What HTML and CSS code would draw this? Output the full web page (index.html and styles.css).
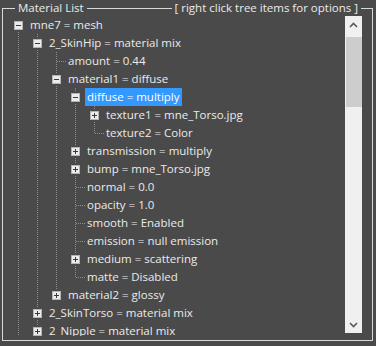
FILE: index.html
```html
<!DOCTYPE html>
<html lang="en">
<head>
    <meta charset="UTF-8">
    <title>Material List</title>
    <link rel="stylesheet" href="styles.css">
</head>
<body>
    <svg class="defs" width="0" height="0">
        <symbol id="minus" viewBox="0 0 9 9">
            <rect x="0.5" y="0.5" width="8" height="8" fill="#ececec" stroke="#b4b4b4"/>
            <path d="M2 4.5h5" stroke="#3a3a3a"/>
        </symbol>
        <symbol id="plus" viewBox="0 0 9 9">
            <rect x="0.5" y="0.5" width="8" height="8" fill="#ececec" stroke="#b4b4b4"/>
            <path d="M2 4.5h5M4.5 2v5" stroke="#3a3a3a"/>
        </symbol>
    </svg>

    <div class="group">
        <div class="hdr">
            <span class="cap-l"></span>
            <span class="caption">Material List</span>
            <span class="ln"></span>
            <span class="caption">[ right click tree items for options ]</span>
            <span class="cap-r"></span>
        </div>

        <div class="frame">
            <div class="rows">
                <div class="row"><span class="g first"><svg class="ex"><use href="#minus"/></svg></span><span class="label">mne7 = mesh</span></div>
                <div class="row"><span class="g v"></span><span class="g v"><svg class="ex"><use href="#minus"/></svg></span><span class="label">2_SkinHip = material mix</span></div>
                <div class="row"><span class="g v"></span><span class="g v"></span><span class="g t"></span><span class="label">amount = 0.44</span></div>
                <div class="row"><span class="g v"></span><span class="g v"></span><span class="g v"><svg class="ex"><use href="#minus"/></svg></span><span class="label">material1 = diffuse</span></div>
                <div class="row"><span class="g v"></span><span class="g v"></span><span class="g v"></span><span class="g v"><svg class="ex"><use href="#minus"/></svg></span><span class="label selected">diffuse = multiply</span></div>
                <div class="row"><span class="g v"></span><span class="g v"></span><span class="g v"></span><span class="g v"></span><span class="g v"><svg class="ex"><use href="#plus"/></svg></span><span class="label">texture1 = mne_Torso.jpg</span></div>
                <div class="row"><span class="g v"></span><span class="g v"></span><span class="g v"></span><span class="g v"></span><span class="g l"></span><span class="label">texture2 = Color</span></div>
                <div class="row"><span class="g v"></span><span class="g v"></span><span class="g v"></span><span class="g v"><svg class="ex"><use href="#plus"/></svg></span><span class="label">transmission = multiply</span></div>
                <div class="row"><span class="g v"></span><span class="g v"></span><span class="g v"></span><span class="g v"><svg class="ex"><use href="#plus"/></svg></span><span class="label">bump = mne_Torso.jpg</span></div>
                <div class="row"><span class="g v"></span><span class="g v"></span><span class="g v"></span><span class="g t"></span><span class="label">normal = 0.0</span></div>
                <div class="row"><span class="g v"></span><span class="g v"></span><span class="g v"></span><span class="g t"></span><span class="label">opacity = 1.0</span></div>
                <div class="row"><span class="g v"></span><span class="g v"></span><span class="g v"></span><span class="g t"></span><span class="label">smooth = Enabled</span></div>
                <div class="row"><span class="g v"></span><span class="g v"></span><span class="g v"></span><span class="g t"></span><span class="label">emission = null emission</span></div>
                <div class="row"><span class="g v"></span><span class="g v"></span><span class="g v"></span><span class="g v"><svg class="ex"><use href="#plus"/></svg></span><span class="label">medium = scattering</span></div>
                <div class="row"><span class="g v"></span><span class="g v"></span><span class="g v"></span><span class="g l"></span><span class="label">matte = Disabled</span></div>
                <div class="row"><span class="g v"></span><span class="g v"></span><span class="g top"><svg class="ex"><use href="#plus"/></svg></span><span class="label">material2 = glossy</span></div>
                <div class="row"><span class="g v"></span><span class="g v"><svg class="ex"><use href="#plus"/></svg></span><span class="label">2_SkinTorso = material mix</span></div>
                <div class="row"><span class="g v"></span><span class="g v"><svg class="ex"><use href="#plus"/></svg></span><span class="label">2_Nipple = material mix</span></div>
            </div>

            <div class="sb">
                <div class="sb-btn">
                    <svg width="9" height="6" viewBox="0 0 9 6"><path d="M1 5l3.5-3.5L8 5" fill="none" stroke="#5a5a5a" stroke-width="1.6"/></svg>
                </div>
                <div class="sb-thumb"></div>
                <div class="sb-track"></div>
                <div class="sb-btn">
                    <svg width="9" height="6" viewBox="0 0 9 6"><path d="M1 1l3.5 3.5L8 1" fill="none" stroke="#5a5a5a" stroke-width="1.6"/></svg>
                </div>
            </div>
        </div>
    </div>
</body>
</html>
```

FILE: styles.css
```css
body {
    margin: 0;
    background-color: #4a4a4a;
    font-family: "Open Sans", "Noto Sans", sans-serif;
    font-size: 11.5px;
    color: #ebebeb;
}

.defs {
    display: block;
    height: 0;
}

.group {
    margin-left: 2px;
    width: 371px;
}

/* caption row, the frame's top edge */
.hdr {
    display: flex;
    align-items: flex-start;
    height: 16px;
}

.cap-l {
    width: 13px;
    height: 8px;
    margin-top: 8px;
    border-top: 1px solid #d8d8d8;
    border-left: 1px solid #d8d8d8;
    box-sizing: border-box;
}

.cap-r {
    width: 12px;
    height: 8px;
    margin-top: 8px;
    border-top: 1px solid #d8d8d8;
    border-right: 1px solid #d8d8d8;
    box-sizing: border-box;
}

.ln {
    flex: 1;
    margin-top: 8px;
    border-top: 1px solid #d8d8d8;
}

.caption {
    line-height: 16px;
    padding: 0 3px;
    white-space: nowrap;
}

.frame {
    display: flex;
    align-items: flex-start;
    padding: 0 10px 4px 6px;
    border: 1px solid #d8d8d8;
    border-top: none;
}

.rows {
    flex: 1;
    height: 320px;
    overflow: hidden;
}

.row {
    display: flex;
    height: 18px;
}

/* tree guide cells */
.g {
    width: 19px;
    height: 18px;
    flex: none;
}

.v {
    background: repeating-linear-gradient(#8e8e8e 0 1px, transparent 1px 2px) 9px 0 / 1px 18px no-repeat;
}

.t {
    background:
        repeating-linear-gradient(#8e8e8e 0 1px, transparent 1px 2px) 9px 0 / 1px 18px no-repeat,
        repeating-linear-gradient(90deg, #8e8e8e 0 1px, transparent 1px 2px) 10px 9px / 9px 1px no-repeat;
}

.l {
    background:
        repeating-linear-gradient(#8e8e8e 0 1px, transparent 1px 2px) 9px 0 / 1px 10px no-repeat,
        repeating-linear-gradient(90deg, #8e8e8e 0 1px, transparent 1px 2px) 10px 9px / 9px 1px no-repeat;
}

.top {
    background: repeating-linear-gradient(#8e8e8e 0 1px, transparent 1px 2px) 9px 0 / 1px 6px no-repeat;
}

.first {
    background: repeating-linear-gradient(#8e8e8e 0 1px, transparent 1px 2px) 9px 12px / 1px 6px no-repeat;
}

.ex {
    display: block;
    width: 9px;
    height: 9px;
    margin: 5px 0 0 5px;
    background: #4a4a4a;
    box-shadow: 0 0 0 2px #4a4a4a;
}

.label {
    line-height: 18px;
    padding: 0 2px;
    white-space: nowrap;
}

.selected {
    background-color: #3399ff;
    color: #fff;
}

/* scrollbar */
.sb {
    width: 17px;
    height: 317px;
    flex: none;
    display: flex;
    flex-direction: column;
    background-color: #f0f0f0;
}

.sb-btn {
    height: 17px;
    display: flex;
    align-items: center;
    justify-content: center;
}

.sb-thumb {
    height: 70px;
    margin: 4px 0 0 1px;
    background-color: #cdcdcd;
}

.sb-track {
    flex: 1;
}
```
